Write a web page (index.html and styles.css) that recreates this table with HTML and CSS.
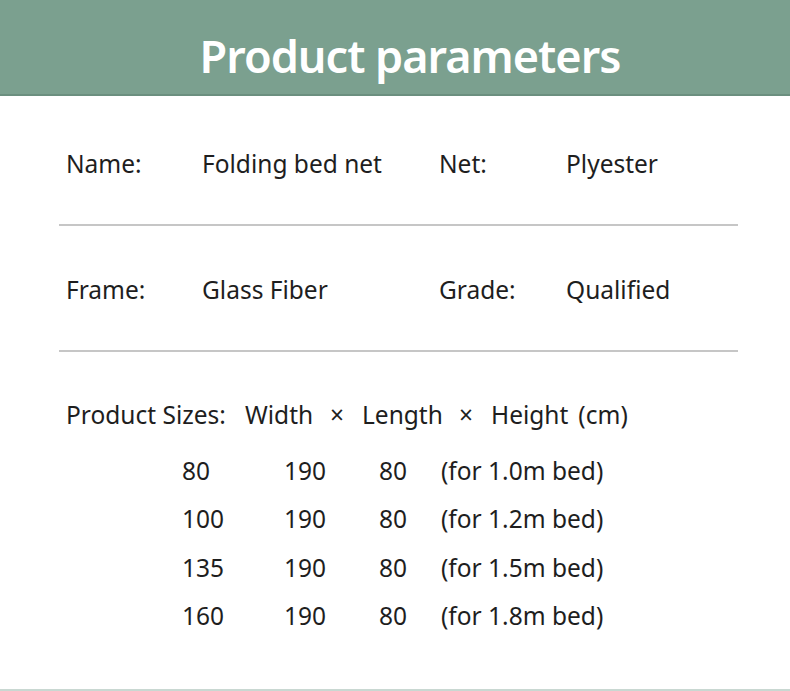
FILE: index.html
```html
<!DOCTYPE html>
<html>
<head>
<meta charset="utf-8">
<link rel="stylesheet" href="styles.css">
</head>
<body>
<div class="page">
  <header class="banner"><h1 class="title">Product parameters</h1></header>
  <section class="params">
    <div class="row row1">
      <span class="lab">Name:</span><span class="val">Folding bed net</span>
      <span class="lab2">Net:</span><span class="val2">Plyester</span>
    </div>
    <div class="rule"></div>
    <div class="row row2">
      <span class="lab">Frame:</span><span class="val">Glass Fiber</span>
      <span class="lab2">Grade:</span><span class="val2">Qualified</span>
    </div>
    <div class="rule"></div>
  </section>
  <section class="sizes">
    <div class="sizes-head">
      <span class="sh-lab">Product Sizes:</span>
      <span class="sh-w">Width</span>
      <span class="sh-x">×</span>
      <span class="sh-l">Length</span>
      <span class="sh-x2">×</span>
      <span class="sh-h">Height</span>
      <span class="sh-cm">(cm)</span>
    </div>
    <div class="srow"><span>80</span><span>190</span><span>80</span><span>(for 1.0m bed)</span></div>
    <div class="srow"><span>100</span><span>190</span><span>80</span><span>(for 1.2m bed)</span></div>
    <div class="srow"><span>135</span><span>190</span><span>80</span><span>(for 1.5m bed)</span></div>
    <div class="srow"><span>160</span><span>190</span><span>80</span><span>(for 1.8m bed)</span></div>
  </section>
  <div class="footer-line"></div>
</div>
</body>
</html>
```
FILE: styles.css
```css
* { box-sizing: border-box; }
html, body { margin: 0; padding: 0; background: #fff; }
body { font-family: "Noto Sans", "Open Sans", sans-serif; color: #1e1e1e; }
.page { width: 790px; height: 691px; display: flex; flex-direction: column; overflow: hidden; }
.banner {
  height: 96px;
  background: #7ba08f;
  border-bottom: 2px solid #6b8f7f;
  display: flex; align-items: center; justify-content: center;
  padding-left: 30px;
}
.title {
  margin: 0; color: #fff; font-size: 45px; font-weight: 600; letter-spacing: -1px;
  line-height: 1; padding-top: 16px;
}
.params { padding: 0 52px 0 59px; }
.row {
  display: grid;
  grid-template-columns: 136px 237px 127px 1fr;
  align-items: center;
  padding-left: 7px;
  font-size: 24.5px;
  line-height: 30px;
}
.row1 { height: 128px; padding-top: 8px; }
.row2 { height: 124px; padding-top: 4px; }
.rule { height: 2px; background: #c6c6c6; }
.sizes { padding-left: 66px; font-size: 24.5px; }
.sizes-head { padding-top: 48px; display: flex; line-height: 30px; }
.sizes-head span { display: inline-block; }
.sh-lab { width: 179px; }
.sh-w { width: 85px; }
.sh-x { width: 32px; }
.sh-l { width: 97px; }
.sh-x2 { width: 32px; }
.sh-h { margin-right: 10px; }
.srow {
  display: grid;
  grid-template-columns: 102px 95px 62px 1fr;
  padding-left: 116px;
  height: 48.3px;
  line-height: 30px;
  align-items: center;
}
.sizes .srow:nth-child(2) { margin-top: 17px; }
.footer-line { margin-top: auto; height: 2px; background: #c9d8d2; }
```
